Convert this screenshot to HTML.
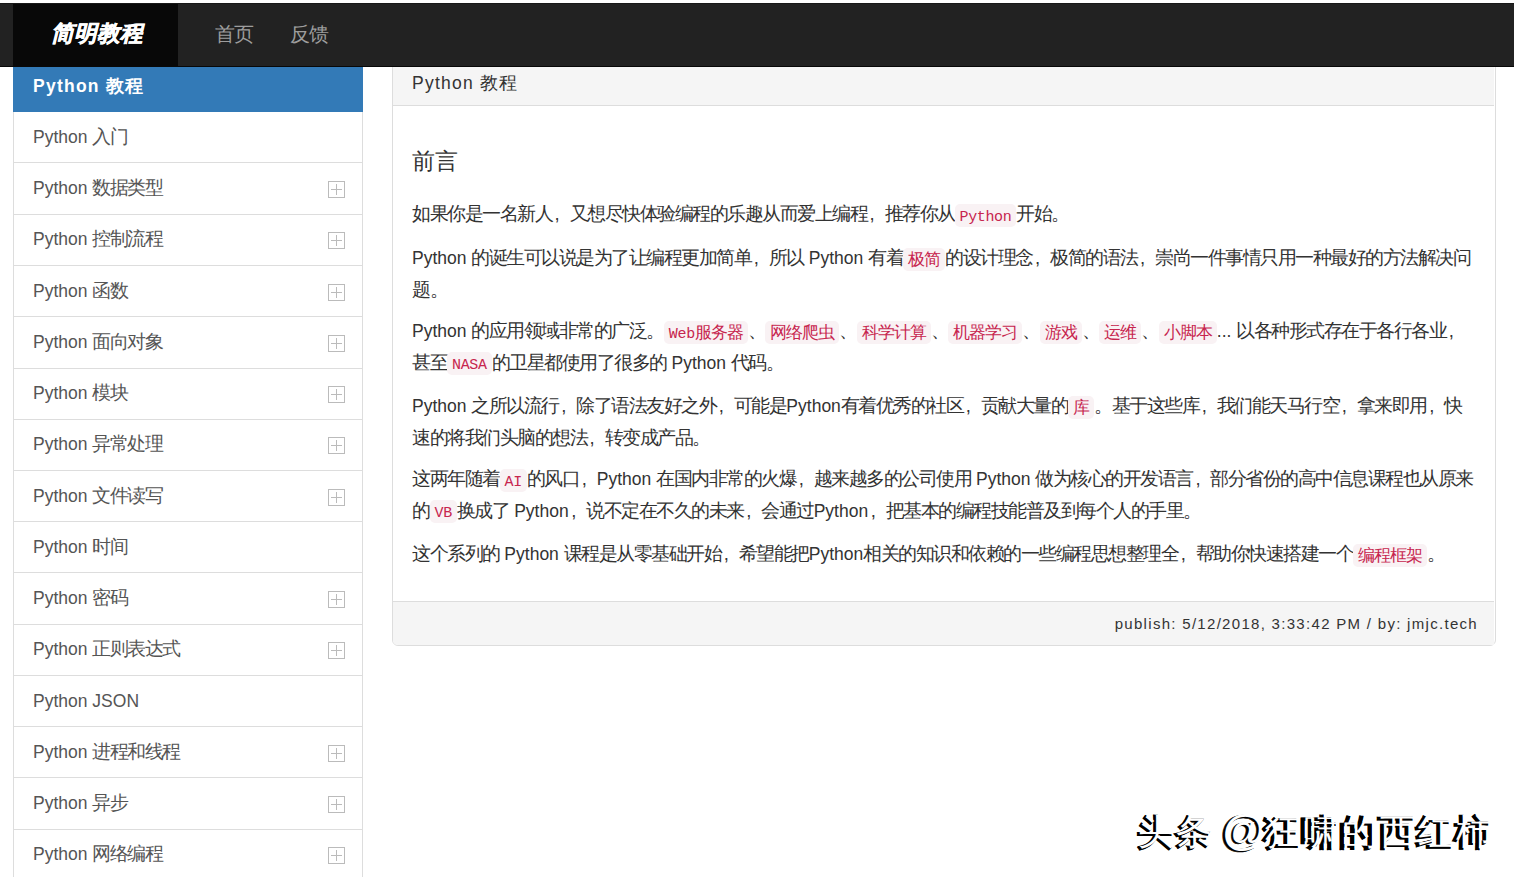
<!DOCTYPE html>
<html><head><meta charset="utf-8">
<style>
*{box-sizing:border-box;margin:0;padding:0}
html,body{width:1514px;height:877px;overflow:hidden;background:#fff}
body{font-family:"Liberation Sans",sans-serif;font-size:17.5px;color:#333;position:relative}
.abs{position:absolute}
#nav{left:0;top:3px;width:1514px;height:64px;background:#222;border-top:1px solid #181818;border-bottom:1px solid #080808;z-index:5}
#brand{left:13px;top:0;width:165px;height:62px;background:#080808}
#brand span{position:absolute;left:38px;top:17px;font-size:22.5px;font-weight:bold;font-style:italic;color:#fff;line-height:25px;white-space:nowrap;-webkit-text-stroke:0.5px #fff}
.nl{top:0;height:62px;line-height:60px;color:#9d9d9d;font-size:20px;white-space:nowrap;letter-spacing:-1px}
#side{left:13px;top:0;width:350px}
.it{position:absolute;left:0;width:350px;border:1px solid #ddd;border-top:0;color:#555;line-height:50px;padding-left:19px;white-space:nowrap;letter-spacing:-0.5px}
.it.act{background:#337ab7;border-color:#337ab7;color:#fff;font-weight:bold;letter-spacing:1.25px;padding-left:19px;line-height:53px}
.plus{position:absolute;left:314px;top:18px;width:17px;height:17px;border:1px solid #bbb}
.plus:before{content:"";position:absolute;left:2px;top:7px;width:11px;height:1px;background:#bbb}
.plus:after{content:"";position:absolute;left:7px;top:2px;width:1px;height:11px;background:#bbb}
#panel{left:392px;top:54px;width:1104px;height:592px;border:1px solid #ddd;border-radius:6px}
#ph{position:absolute;left:0;top:0;width:1101px;height:51px;background:#f5f5f5;border-bottom:1px solid #ddd;padding-left:19px;line-height:56px;white-space:nowrap;letter-spacing:1.25px}
#pb{position:absolute;left:19px;top:52px;width:1070px}
#pb h4{position:absolute;left:0;top:42px;font-size:22.5px;font-weight:normal;line-height:25px;white-space:nowrap}
#pb p{position:absolute;left:0;line-height:1.8;white-space:nowrap;letter-spacing:-0.5px}
.l{letter-spacing:0}
.c{font-size:18.5px;letter-spacing:-1.5px;line-height:0}
.cc{font-size:17px;letter-spacing:-1px;line-height:0}
.cm{display:inline-block;width:17.5px;letter-spacing:0;padding-left:2.5px}
.cl{letter-spacing:-0.35px;font-size:15px}
code{font-family:"Liberation Mono",monospace;font-size:15.75px;color:#c7254e;background:#f9f2f4;border-radius:5px;padding:3.5px 5px 1.5px;letter-spacing:0}
#pf{position:absolute;left:0;top:546px;width:1101px;height:44px;background:#f5f5f5;border-top:1px solid #ddd;text-align:right;padding-right:16px;line-height:44px;font-size:15px;letter-spacing:1.3px;color:#333;white-space:nowrap;border-radius:0 0 0 5px}
#wm,#wm2{left:1136px;top:806px;font-size:36px;line-height:50px;white-space:nowrap;letter-spacing:2.1px}
#wm{color:#000;font-weight:bold;-webkit-text-stroke:0.6px #000}
#wm2{color:#fff;margin-left:1.5px;margin-top:-1.5px}
.at{font-size:43px;letter-spacing:0;margin-left:-4px;vertical-align:-1px}
</style></head><body>
<div id="nav" class="abs">
  <div id="brand" class="abs"><span>简明教程</span></div>
  <div class="abs nl" style="left:215px">首页</div>
  <div class="abs nl" style="left:290px">反馈</div>
</div>
<div id="side" class="abs">
  <div class="it act" style="top:60px;height:52px">Python 教程</div>
  <div class="it" style="top:112px;height:51px;line-height:50px"><span class="l">Python </span><span class="c">入门</span></div>
  <div class="it" style="top:163px;height:52px;line-height:50px"><span class="l">Python </span><span class="c">数据类型</span><i class="plus" style="top:18px"></i></div>
  <div class="it" style="top:215px;height:51px;line-height:48px"><span class="l">Python </span><span class="c">控制流程</span><i class="plus" style="top:17px"></i></div>
  <div class="it" style="top:266px;height:51px;line-height:50px"><span class="l">Python </span><span class="c">函数</span><i class="plus" style="top:18px"></i></div>
  <div class="it" style="top:317px;height:52px;line-height:50px"><span class="l">Python </span><span class="c">面向对象</span><i class="plus" style="top:18px"></i></div>
  <div class="it" style="top:369px;height:51px;line-height:48px"><span class="l">Python </span><span class="c">模块</span><i class="plus" style="top:17px"></i></div>
  <div class="it" style="top:420px;height:51px;line-height:48px"><span class="l">Python </span><span class="c">异常处理</span><i class="plus" style="top:17px"></i></div>
  <div class="it" style="top:471px;height:51px;line-height:50px"><span class="l">Python </span><span class="c">文件读写</span><i class="plus" style="top:18px"></i></div>
  <div class="it" style="top:522px;height:51px;line-height:50px"><span class="l">Python </span><span class="c">时间</span></div>
  <div class="it" style="top:573px;height:52px;line-height:50px"><span class="l">Python </span><span class="c">密码</span><i class="plus" style="top:18px"></i></div>
  <div class="it" style="top:625px;height:51px;line-height:48px"><span class="l">Python </span><span class="c">正则表达式</span><i class="plus" style="top:17px"></i></div>
  <div class="it" style="top:676px;height:51px;line-height:50px"><span class="l">Python JSON</span></div>
  <div class="it" style="top:727px;height:51px;line-height:50px"><span class="l">Python </span><span class="c">进程和线程</span><i class="plus" style="top:18px"></i></div>
  <div class="it" style="top:778px;height:52px;line-height:50px"><span class="l">Python </span><span class="c">异步</span><i class="plus" style="top:18px"></i></div>
  <div class="it" style="top:830px;height:51px;line-height:48px"><span class="l">Python </span><span class="c">网络编程</span><i class="plus" style="top:17px"></i></div>
</div>
<div id="panel" class="abs">
  <div id="ph">Python 教程</div>
  <div id="pb">
    <h4>前言</h4>
    <p style="top:92px"><span class="c">如果你是一名新人<span class="cm">,</span>又想尽快体验编程的乐趣从而爱上编程<span class="cm">,</span>推荐你从</span><code><span class="cl">Python</span></code><span class="c">开始。</span></p>
    <p style="top:136px"><span class="l">Python </span><span class="c">的诞生可以说是为了让编程更加简单<span class="cm">,</span>所以</span><span class="l"> Python </span><span class="c">有着</span><code><span class="cc">极简</span></code><span class="c">的设计理念<span class="cm">,</span>极简的语法<span class="cm">,</span>崇尚一件事情只用一种最好的方法解决问</span><br><span class="c">题。</span></p>
    <p style="top:209px"><span class="l">Python </span><span class="c">的应用领域非常的广泛。</span><code><span class="cl">Web</span><span class="cc">服务器</span></code><span class="c">、</span><code><span class="cc">网络爬虫</span></code><span class="c">、</span><code><span class="cc">科学计算</span></code><span class="c">、</span><code><span class="cc">机器学习</span></code><span class="c">、</span><code><span class="cc">游戏</span></code><span class="c">、</span><code><span class="cc">运维</span></code><span class="c">、</span><code><span class="cc">小脚本</span></code><span class="l">... </span><span class="c">以各种形式存在于各行各业<span class="cm">,</span></span><br><span class="c">甚至</span><code><span class="cl">NASA</span></code><span class="c">的卫星都使用了很多的</span><span class="l"> Python </span><span class="c">代码。</span></p>
    <p style="top:284px"><span class="l">Python </span><span class="c">之所以流行<span class="cm">,</span>除了语法友好之外<span class="cm">,</span>可能是</span><span class="l">Python</span><span class="c">有着优秀的社区<span class="cm">,</span>贡献大量的</span><code><span class="cc">库</span></code><span class="c">。基于这些库<span class="cm">,</span>我们能天马行空<span class="cm">,</span>拿来即用<span class="cm">,</span>快</span><br><span class="c">速的将我们头脑的想法<span class="cm">,</span>转变成产品。</span></p>
    <p style="top:357px"><span class="c">这两年随着</span><code><span class="cl">AI</span></code><span class="c">的风口<span class="cm">,</span></span><span class="l">Python </span><span class="c">在国内非常的火爆<span class="cm">,</span>越来越多的公司使用</span><span class="l"> Python </span><span class="c">做为核心的开发语言<span class="cm">,</span>部分省份的高中信息课程也从原来</span><br><span class="c">的</span><code><span class="cl">VB</span></code><span class="c">换成了</span><span class="l"> Python</span><span class="c"><span class="cm">,</span>说不定在不久的未来<span class="cm">,</span>会通过</span><span class="l">Python</span><span class="c"><span class="cm">,</span>把基本的编程技能普及到每个人的手里。</span></p>
    <p style="top:432px"><span class="c">这个系列的</span><span class="l"> Python </span><span class="c">课程是从零基础开始<span class="cm">,</span>希望能把</span><span class="l">Python</span><span class="c">相关的知识和依赖的一些编程思想整理全<span class="cm">,</span>帮助你快速搭建一个</span><code><span class="cc">编程框架</span></code><span class="c">。</span></p>
  </div>
  <div id="pf">publish: 5/12/2018, 3:33:42 PM / by: jmjc.tech</div>
</div>
<div id="wm" class="abs">头条 <span class="at">@</span>狂啸的西红柿</div>
<div id="wm2" class="abs">头条 <span class="at">@</span>狂啸的西红柿</div>
</body></html>
